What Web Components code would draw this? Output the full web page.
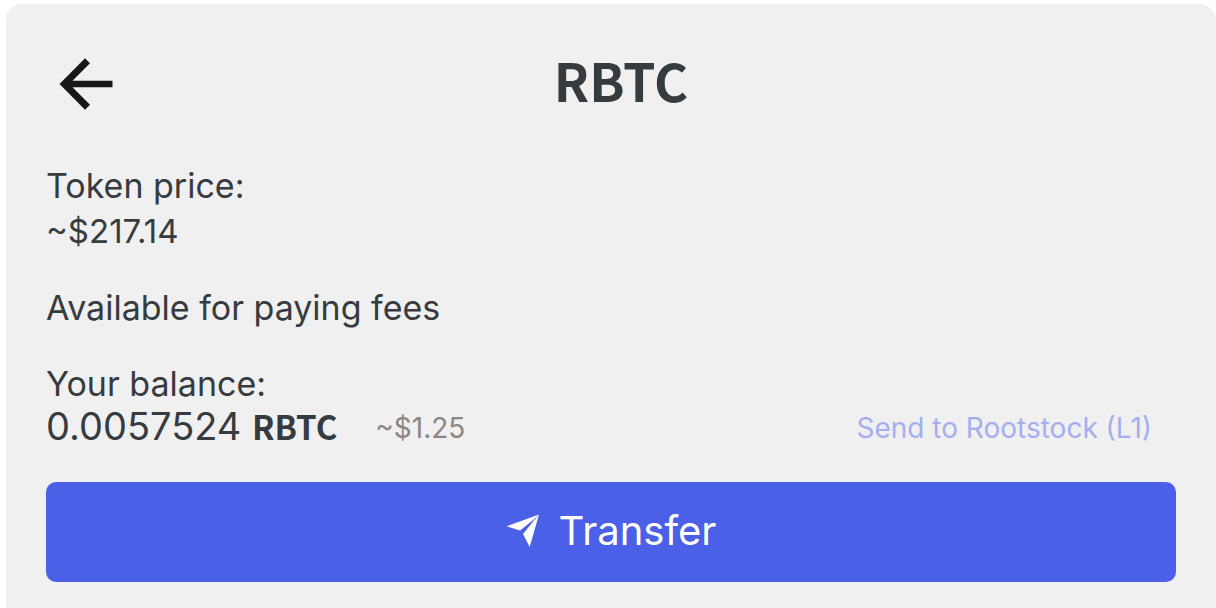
<!DOCTYPE html>
<html lang="en">
<head>
<meta charset="utf-8">
<meta name="viewport" content="width=device-width, initial-scale=1">
<title>RBTC</title>
<style>
  body { margin: 0; background: #fff; font-family: Inter, "Liberation Sans", sans-serif; color: #363b3f; }
</style>
</head>
<body>
<token-page></token-page>

<template id="token-page">
  <style>
    :host { display: block; padding: 4px 0 0 6px; }
    main { box-sizing: border-box; min-height: calc(100vh - 4px); padding: 40px 40px 26px; border-radius: 16px 16px 0 0; background: #f0f0f0; }
    token-header { margin-bottom: 40px; }
    .note { margin: 32px 0; font-size: 34px; line-height: 44px; }
    token-balance { margin-bottom: 32px; }
  </style>
  <main>
    <token-header>RBTC</token-header>
    <token-price>~$217.14</token-price>
    <p class="note">Available for paying fees</p>
    <token-balance>
      <span slot="amount">0.0057524</span>
      <span slot="symbol">RBTC</span>
      <span slot="value">~$1.25</span>
      <span slot="action">Send to Rootstock (L1)</span>
    </token-balance>
    <transfer-button>Transfer</transfer-button>
  </main>
</template>

<template id="token-header">
  <style>
    :host { display: block; }
    header { display: flex; align-items: flex-start; padding-right: 60px; }
    button { display: grid; place-items: center; width: 80px; height: 80px; padding: 0; border: 0; background: none; color: #181818; cursor: pointer; }
    svg { width: 54px; height: 54px; display: block; }
    h1 { flex: 1; margin: 0; text-align: center; font: 700 52px/72px "Noto Sans CJK SC", "Noto Sans", sans-serif; }
  </style>
  <header>
    <button type="button" aria-label="Back">
      <svg viewBox="0 0 54 54" fill="currentColor"><path d="M.5 27 26 1.200 31 6.200 13.500 23.700H53.500V30.300H13.500L31 47.800 26 52.800z"/></svg>
    </button>
    <h1><slot></slot></h1>
  </header>
</template>

<template id="token-price">
  <style>
    :host { display: block; }
    dl, dt, dd { margin: 0; }
    dt { font-size: 34px; line-height: 44px; }
    dd { font-size: 33px; line-height: 46px; }
  </style>
  <dl><dt>Token price:</dt><dd><slot></slot></dd></dl>
</template>

<template id="token-balance">
  <style>
    :host { display: block; }
    h2 { margin: 0; font-size: 34px; font-weight: 400; line-height: 44px; }
    .row { display: flex; align-items: flex-start; padding-right: 24px; }
    .amount { font-size: 38px; line-height: 40px; }
    .symbol { font: 700 33px/34px "Noto Sans CJK SC", "Noto Sans", sans-serif; }
    .value { margin-left: 38px; font-size: 28px; line-height: 44px; color: #8b8680; }
    a { margin-left: auto; font-size: 28px; line-height: 44px; color: #a5aff0; text-decoration: none; }
  </style>
  <h2>Your balance:</h2>
  <div class="row">
    <span class="amount"><slot name="amount"></slot> <span class="symbol"><slot name="symbol"></slot></span></span>
    <span class="value"><slot name="value"></slot></span>
    <a href="#send"><slot name="action"></slot></a>
  </div>
</template>

<template id="transfer-button">
  <style>
    :host { display: block; }
    button { display: flex; align-items: center; justify-content: center; gap: 20px; box-sizing: border-box; width: 100%; height: 100px; padding: 0; border: 0; border-radius: 10px; background: #4a60e6; color: #fff; font: 400 40px/48px Inter, "Liberation Sans", sans-serif; cursor: pointer; }
    svg { width: 33px; height: 36px; display: block; }
    .label { padding-bottom: 2px; }
  </style>
  <button type="button">
    <svg viewBox="0 -2 33 36" fill="currentColor" aria-hidden="true"><path d="M.5 10.200 33-1.500 26 5 14 14.600zM33-1.500 23.700 31 17 18 27.500 5z"/></svg>
    <span class="label"><slot></slot></span>
  </button>
</template>

<script>
  for (const name of ['token-header', 'token-price', 'token-balance', 'transfer-button', 'token-page']) {
    customElements.define(name, class extends HTMLElement {
      constructor() {
        super();
        this.attachShadow({ mode: 'open' }).append(document.getElementById(name).content.cloneNode(true));
      }
    });
  }
</script>
</body>
</html>
